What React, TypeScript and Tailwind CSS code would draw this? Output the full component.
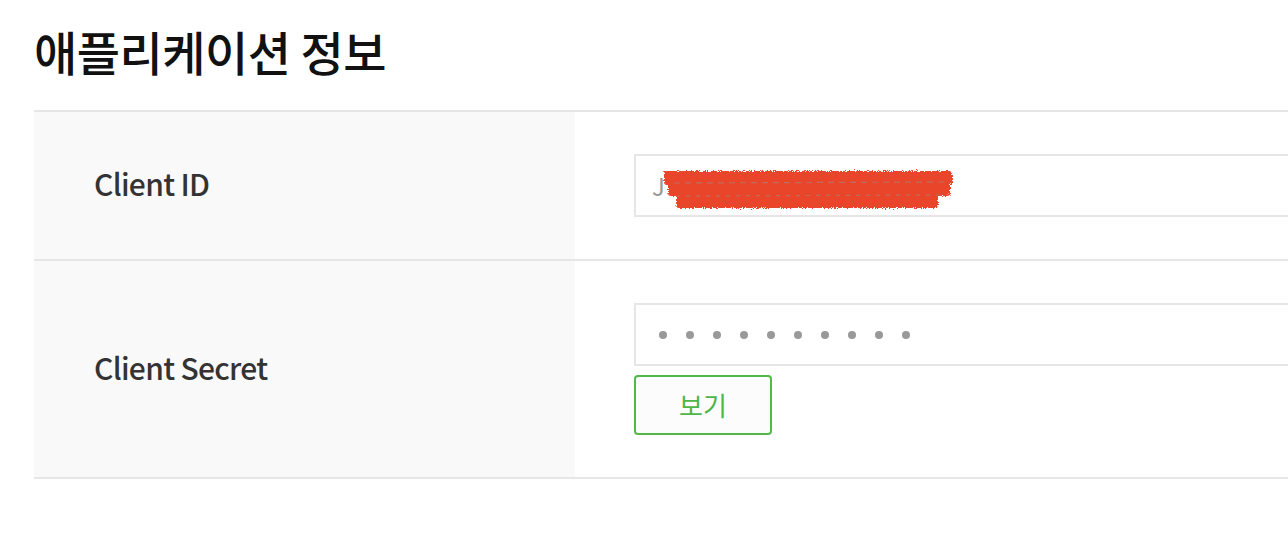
import React from "react";

const font = { fontFamily: '"Noto Sans CJK KR", "Noto Sans", sans-serif' };

const Scribble = () => (
  <svg
    className="absolute left-[24px] top-[11px]"
    width="298"
    height="48"
    viewBox="0 0 298 48"
  >
    <defs>
      <filter id="rough" x="-5%" y="-20%" width="110%" height="140%">
        <feTurbulence type="fractalNoise" baseFrequency="0.9" numOctaves="2" seed="3" />
        <feDisplacementMap in="SourceGraphic" scale="5" />
      </filter>
    </defs>
    <g filter="url(#rough)" fill="#e8452b">
      <rect x="4" y="4" width="288" height="14" rx="3" />
      <rect x="8" y="15" width="282" height="14" rx="3" />
      <rect x="16" y="27" width="262" height="14" rx="3" />
    </g>
    <g stroke="#9a8f8a" strokeWidth="1.2" opacity="0.55" fill="none">
      <path d="M14 16 L284 15" strokeDasharray="6 5" />
      <path d="M16 29 L282 28" strokeDasharray="4 6" />
    </g>
  </svg>
);

export default function App() {
  return (
    <div className="w-full overflow-hidden bg-white min-h-[536px]" style={font}>
      <div className="pl-[34px] pt-[20px]">
        <h1 className="text-[47px] leading-[62px] font-medium text-[#111] tracking-[-0.5px]">
          애플리케이션 정보
        </h1>
        <div className="mt-[28px] w-[1400px] border-t-2 border-[#e6e6e6]">
          {/* Client ID */}
          <div className="flex border-b-2 border-[#e6e6e6]">
            <div className="w-[541px] shrink-0 bg-[#f9f9f9] pl-[60px] flex items-center">
              <span className="text-[30px] font-medium text-[#333] tracking-[-0.7px] -mt-[4px]">
                Client ID
              </span>
            </div>
            <div className="flex-1 pl-[59px] py-[42px]">
              <div className="relative h-[63px] border-2 border-[#e6e6e6] bg-white flex items-center pl-[16px]">
                <span className="text-[24px] text-[#999]">J</span>
                <Scribble />
              </div>
            </div>
          </div>
          {/* Client Secret */}
          <div className="flex border-b-2 border-[#e6e6e6]">
            <div className="w-[541px] shrink-0 bg-[#f9f9f9] pl-[60px] flex items-center">
              <span className="text-[30px] font-medium text-[#333] tracking-[-0.7px] -mt-[4px]">
                Client Secret
              </span>
            </div>
            <div className="flex-1 pl-[59px] pt-[42px] pb-[42px]">
              <div className="h-[63px] border-2 border-[#e6e6e6] bg-white flex items-center gap-[19px] pl-[23px]">
                {Array.from({ length: 10 }).map((_, i) => (
                  <span key={i} className="w-[8px] h-[8px] rounded-full bg-[#999]" />
                ))}
              </div>
              <button className="mt-[9px] w-[138px] h-[60px] rounded-[4px] border-2 border-[#52b848] bg-[#fcfcfc] text-[26px] text-[#4cb648] leading-none">
                보기
              </button>
            </div>
          </div>
        </div>
      </div>
    </div>
  );
}
